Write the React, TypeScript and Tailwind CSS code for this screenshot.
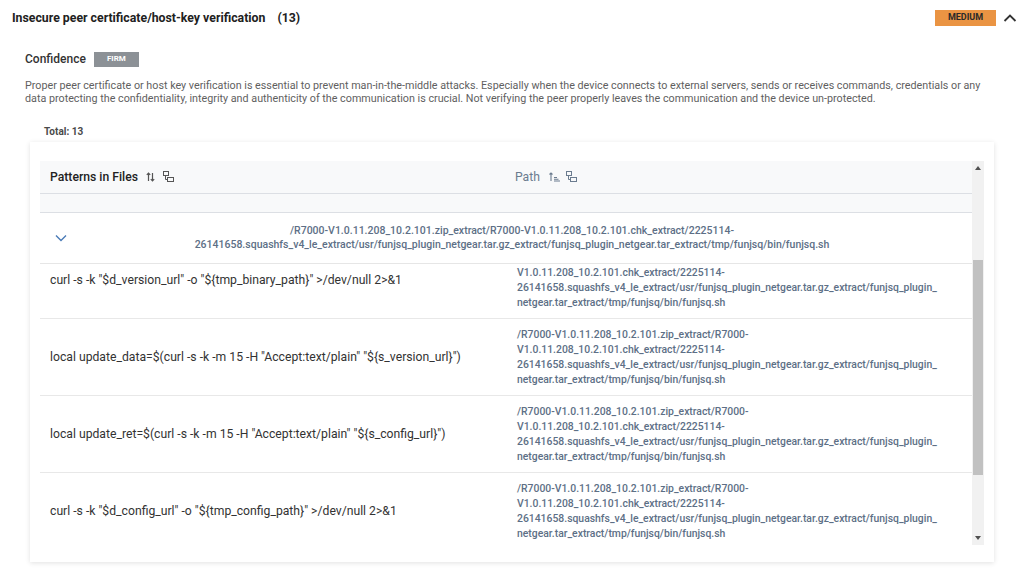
import { useEffect, useRef } from "react";

const PATH_LINES = [
  "/R7000-V1.0.11.208_10.2.101.zip_extract/R7000-",
  "V1.0.11.208_10.2.101.chk_extract/2225114-",
  "26141658.squashfs_v4_le_extract/usr/funjsq_plugin_netgear.tar.gz_extract/funjsq_plugin_",
  "netgear.tar_extract/tmp/funjsq/bin/funjsq.sh",
];

const ROWS = [
  'curl -s -k "$d_version_url" -o "${tmp_binary_path}" >/dev/null 2>&1',
  'local update_data=$(curl -s -k -m 15 -H "Accept:text/plain" "${s_version_url}")',
  'local update_ret=$(curl -s -k -m 15 -H "Accept:text/plain" "${s_config_url}")',
  'curl -s -k "$d_config_url" -o "${tmp_config_path}" >/dev/null 2>&1',
];

function SortIcon() {
  return (
    <svg width="9" height="10" viewBox="0 0 9 10" fill="none" stroke="#555" strokeWidth="1.2">
      <path d="M2.5 9V1M0.8 2.8L2.5 1L4.2 2.8" />
      <path d="M6.5 1v8M4.8 7.2L6.5 9L8.2 7.2" />
    </svg>
  );
}

function SortAscIcon() {
  return (
    <svg width="11" height="10" viewBox="0 0 11 10" fill="none" stroke="#6b7c8f" strokeWidth="1.1">
      <path d="M2 9V1M0.5 2.5L2 1L3.5 2.5" />
      <path d="M5 5.5h3M5 7.2h4.5M5 9h6" />
    </svg>
  );
}

function GroupIcon({ color }: { color: string }) {
  return (
    <svg width="11" height="11" viewBox="0 0 11 11" fill="none" stroke={color} strokeWidth="1">
      <rect x="0.5" y="0.5" width="5" height="4" />
      <rect x="4.5" y="6.5" width="6" height="4" />
      <path d="M2.5 4.5v4h2" />
    </svg>
  );
}

function PathCell() {
  return (
    <div className="text-[10.4px] leading-[15px] font-medium text-[#5d6f86] whitespace-nowrap">
      {PATH_LINES.map((l, i) => (
        <div key={i}>{l}</div>
      ))}
    </div>
  );
}

export default function App() {
  const bodyRef = useRef<HTMLDivElement>(null);

  // the list is scrolled a little, first row sits partly under the group row
  useEffect(() => {
    if (bodyRef.current) bodyRef.current.scrollTop = 22;
  }, []);

  return (
    <div className="w-[1024px] h-[571px] bg-white overflow-hidden" style={{ fontFamily: "Roboto, 'Liberation Sans', sans-serif" }}>
      {/* header */}
      <div className="h-[36px] flex items-center justify-between pl-[12px] pr-[7px]">
        <div className="text-[12.3px] font-bold text-[#212121]">
          Insecure peer certificate/host-key verification<span className="ml-[12px]">(13)</span>
        </div>
        <div className="flex items-center gap-[7px]">
          <span className="w-[61px] h-[16px] flex items-center justify-center bg-[#ea9443] text-[9px] font-bold text-[#2a2a2a]">
            MEDIUM
          </span>
          <svg width="14" height="10" viewBox="0 0 14 10" fill="none" stroke="#333" strokeWidth="1.8">
            <path d="M1.5 8L7 2.5L12.5 8" />
          </svg>
        </div>
      </div>

      <div className="pl-[25px] pr-[20px]">
        <div className="flex items-center gap-[8px] mt-[14px]">
          <span className="text-[12px] font-medium text-[#333]">Confidence</span>
          <span className="w-[45px] h-[15px] flex items-center justify-center bg-[#8c9196] text-white text-[8px] font-bold">
            FIRM
          </span>
        </div>
        <p className="mt-[11px] text-[10.75px] leading-[13px] text-[#5f5f5f] whitespace-nowrap">
          Proper peer certificate or host key verification is essential to prevent man-in-the-middle attacks. Especially when the device connects to external servers, sends or receives commands, credentials or any
          <br />
          data protecting the confidentiality, integrity and authenticity of the communication is crucial. Not verifying the peer properly leaves the communication and the device un-protected.
        </p>
      </div>

      <div className="pl-[44px] mt-[19px] text-[10px] font-bold text-[#4a4a4a]">Total: 13</div>

      {/* card */}
      <div className="mt-[3px] ml-[30px] w-[964px] bg-white shadow-[0_1px_5px_rgba(0,0,0,0.12)] pt-[19px] pb-[17px] px-[10px]">
        <div className="flex h-[384px]">
          <div className="flex-1 flex flex-col min-w-0">
            {/* column header */}
            <div className="h-[33px] flex items-center bg-[#f8f9fa] border-b border-[#dcdfe4]">
              <div className="w-[465px] pl-[10px] flex items-center gap-[8px]">
                <span className="text-[12.2px] font-medium text-[#222]">Patterns in Files</span>
                <SortIcon />
                <GroupIcon color="#555" />
              </div>
              <div className="pl-[10px] flex items-center gap-[6px]">
                <span className="text-[12.2px] text-[#6b7c8f] mr-[3px]">Path</span>
                <SortAscIcon />
                <GroupIcon color="#6b7c8f" />
              </div>
            </div>
            {/* filter row */}
            <div className="h-[19px] bg-[#f8f9fa] border-b border-[#dcdfe4]" />
            {/* group row */}
            <div className="h-[51px] flex items-center border-b border-[#e6e6e6]">
              <div className="pl-[15px] w-[40px]">
                <svg width="12" height="8" viewBox="0 0 12 8" fill="none" stroke="#4a7bb7" strokeWidth="1.4">
                  <path d="M1 1.5L6 6.5L11 1.5" />
                </svg>
              </div>
              <div className="flex-1 text-center text-[10.5px] leading-[14px] font-medium text-[#5d6f86] whitespace-nowrap">
                <div>/R7000-V1.0.11.208_10.2.101.zip_extract/R7000-V1.0.11.208_10.2.101.chk_extract/2225114-</div>
                <div>26141658.squashfs_v4_le_extract/usr/funjsq_plugin_netgear.tar.gz_extract/funjsq_plugin_netgear.tar_extract/tmp/funjsq/bin/funjsq.sh</div>
              </div>
              <div className="w-[28px]" />
            </div>
            {/* body */}
            <div ref={bodyRef} className="flex-1 overflow-hidden">
              {ROWS.map((r, i) => (
                <div key={i} className="h-[77px] flex items-center border-b border-[#e8e8e8]">
                  <div className="w-[465px] pl-[10px] text-[12.2px] text-[#333] whitespace-nowrap">{r}</div>
                  <div className="pl-[12px]">
                    <PathCell />
                  </div>
                </div>
              ))}
            </div>
          </div>
          {/* scrollbar */}
          <div className="w-[12px] bg-[#f1f1f1] flex flex-col">
            <div className="h-[14px] flex items-center justify-center">
              <svg width="6" height="4" viewBox="0 0 6 4"><path d="M0 4L3 0L6 4Z" fill="#505050" /></svg>
            </div>
            <div className="h-[85px]" />
            <div className="h-[215px] mx-[1px] bg-[#c1c1c1]" />
            <div className="flex-1" />
            <div className="h-[14px] flex items-center justify-center">
              <svg width="6" height="4" viewBox="0 0 6 4"><path d="M0 0L6 0L3 4Z" fill="#505050" /></svg>
            </div>
          </div>
        </div>
      </div>
    </div>
  );
}
